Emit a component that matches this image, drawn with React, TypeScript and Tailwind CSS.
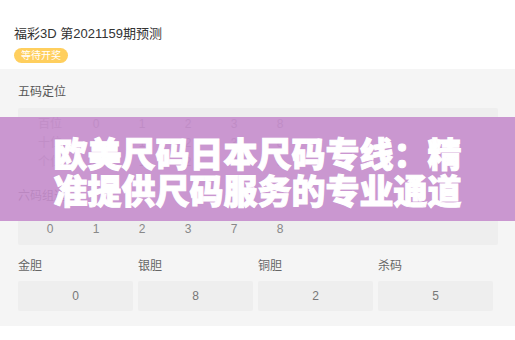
import React from 'react';

const font = "font-['Liberation_Sans','Noto_Sans_CJK_SC',sans-serif]";

const fiveRows = [
  { label: '百位', nums: ['0', '1', '2', '3', '8'] },
  { label: '十位', nums: ['0', '1', '2', '3', '8'] },
  { label: '个位', nums: ['0', '1', '2', '3', '8'] },
];

const sixNums = ['0', '1', '2', '3', '7', '8'];

const picks = [
  { label: '金胆', value: '0' },
  { label: '银胆', value: '8' },
  { label: '铜胆', value: '2' },
  { label: '杀码', value: '5' },
];

const App: React.FC = () => {
  return (
    <div className={`relative w-[515px] h-[340px] overflow-hidden bg-white ${font}`}>
      {/* Header */}
      <div className="h-[69px] px-[14px] pt-[25px]">
        <div className="text-[13px] leading-[17px] text-[#333]">福彩3D 第2021159期预测</div>
        <div className="mt-[4px] inline-flex h-[15px] items-center rounded-full bg-[#ffcf5e] px-[7px] text-[10px] text-white">
          等待开奖
        </div>
      </div>

      {/* Body */}
      <div className="h-[257px] bg-[#f5f5f5] px-[18px] pt-[15px]">
        <div className="text-[12px] leading-[17px] text-[#555]">五码定位</div>
        <div className="mt-[7px] w-[480px] rounded-[2px] bg-[#eeeeee] px-[9px] py-[6px]">
          {fiveRows.map((r) => (
            <div key={r.label} className="flex h-[19px] items-center text-[12px] text-[#999]">
              <span className="w-[46px] text-center">{r.label}</span>
              {r.nums.map((n, i) => (
                <span key={i} className="w-[46px] text-center text-[#888]">{n}</span>
              ))}
            </div>
          ))}
        </div>

        <div className="mt-[11px] text-[12px] leading-[17px] text-[#555]">六码组选</div>
        <div className="mt-[7px] w-[480px] rounded-[2px] bg-[#eeeeee] px-[9px] py-[7px]">
          <div className="flex h-[19px] items-center text-[12px] text-[#888]">
            {sixNums.map((n, i) => (
              <span key={i} className="w-[46px] text-center">{n}</span>
            ))}
          </div>
        </div>

        <div className="mt-[13px] flex gap-[5px]">
          {picks.map((p) => (
            <div key={p.label} className="w-[115px]">
              <div className="text-[12px] leading-[17px] text-[#666]">{p.label}</div>
              <div className="mt-[6px] flex h-[30px] items-center justify-center rounded-[2px] bg-[#eeeeee] text-[12px] text-[#777]">
                {p.value}
              </div>
            </div>
          ))}
        </div>
      </div>

      {/* Overlay band */}
      <div className="absolute left-0 top-[117px] flex h-[104px] w-[515px] flex-col items-center justify-center bg-[#c58dcc]/90 pt-[4px] font-['Noto_Sans_CJK_SC',sans-serif] text-[34px] font-black leading-[37px] text-white [-webkit-text-stroke:1px_white]">
        <div>欧美尺码日本尺码专线：精</div>
        <div>准提供尺码服务的专业通道</div>
      </div>
    </div>
  );
};

export default App;
